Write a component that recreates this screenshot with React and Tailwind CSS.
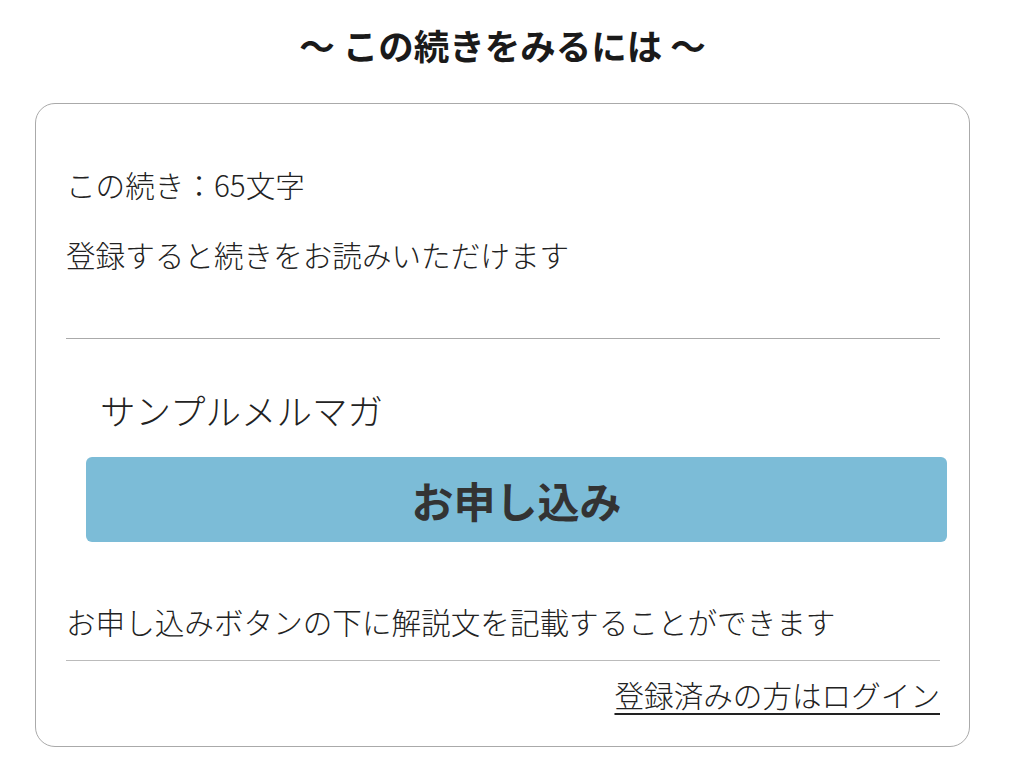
const font = { fontFamily: '"Noto Sans CJK JP", "Noto Sans", sans-serif' };

const App = () => {
  return (
    <div
      className="w-[1005px] min-h-[768px] bg-white px-[35px] text-[#222]"
      style={font}
    >
      {/* heading */}
      <h2 className="pt-[23px] h-[67px] text-center text-[35.5px] leading-[44px] font-bold text-[#1a1a1a]">
        〜 この続きをみるには 〜
      </h2>

      {/* card */}
      <div className="mt-[36px] rounded-[20px] border border-[#aaa] pl-[30px] pr-[29px] pt-[61px] pb-[31px] font-light">
        <p className="text-[29.6px] leading-[40px]">この続き：65文字</p>
        <p className="mt-[30px] text-[29.6px] leading-[40px]">
          登録すると続きをお読みいただけます
        </p>

        <div className="mt-[63px] h-px bg-[#aaa]" />

        <p className="mt-[49px] pl-[34px] text-[35.5px] leading-[44px]">
          サンプルメルマガ
        </p>

        <div className="mt-[25px] ml-[20px] -mr-[7px]">
          <button className="w-full h-[85px] rounded-[6px] bg-[#7cbcd7] text-[42px] font-bold text-[#333] flex items-center justify-center">
            お申し込み
          </button>
        </div>

        <p className="mt-[60px] text-[29.6px] leading-[40px]">
          お申し込みボタンの下に解説文を記載することができます
        </p>

        <div className="mt-[18px] h-px bg-[#bbb]" />

        <div className="mt-[14px] flex justify-end">
          <a className="text-[29.6px] leading-[40px] underline underline-offset-[6px] decoration-[2px] text-[#222]">
            登録済みの方はログイン
          </a>
        </div>
      </div>
    </div>
  );
};

export default App;
